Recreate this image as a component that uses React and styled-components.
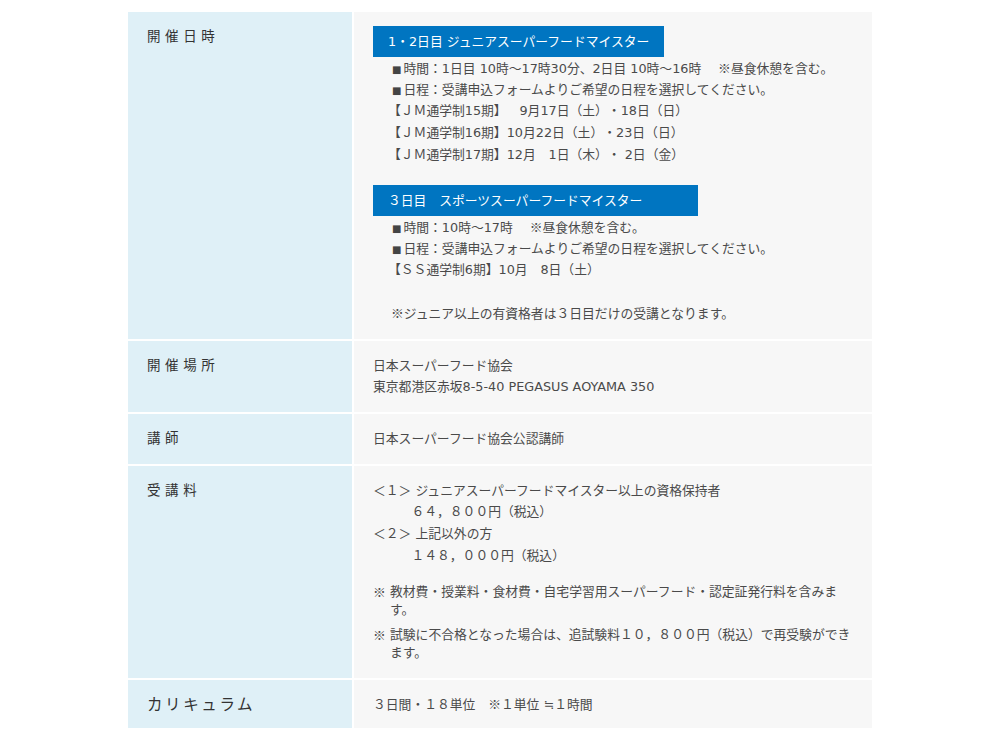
import React from "react";
import styled, { createGlobalStyle } from "styled-components";

const Global = createGlobalStyle`
  html, body { margin: 0; padding: 0; background: #ffffff; }
  body {
    font-family: "DejaVu Sans", "Noto Sans CJK JP", sans-serif;
    color: #444;
    text-spacing-trim: space-all;
  }
`;

const Table = styled.div`
  width: 744px;
  margin: 12px auto 0;
  display: grid;
  grid-template-columns: 224px 518px;
  column-gap: 2px;
  row-gap: 2px;
`;

const Label = styled.div`
  background: #dff0f7;
  padding: 13px 10px 14px 19px;
  font-family: "Noto Sans CJK JP", sans-serif;
  font-size: ${(p) => (p.$big ? "15.5px" : "13.5px")};
  letter-spacing: ${(p) => (p.$big ? "2.6px" : "4.6px")};
  line-height: 21.7px;
  color: #333;
`;

const Cell = styled.div`
  background: #f7f7f7;
  padding: ${(p) => p.$pad || "14px 19px 14px 19px"};
  font-family: "DejaVu Sans", "Noto Sans CJK JP", sans-serif;
  font-size: 12.8px;
  line-height: 21.7px;
  color: #4a4a4a;
  text-spacing-trim: space-all;
`;

const Section = styled.div`
  margin-bottom: ${(p) => p.$mb || "0px"};
`;

const Heading = styled.div`
  width: ${(p) => p.$w}px;
  box-sizing: border-box;
  height: 31px;
  line-height: 31px;
  padding-left: 15px;
  background: #0075c1;
  color: #ffffff;
  font-size: 12.8px;
  white-space: pre;
  overflow: hidden;
`;

const Indented = styled.div`
  padding-left: ${(p) => p.$pl || "15px"};
`;

const Line = styled.div`
  height: ${(p) => p.$h || "21.7px"};
  line-height: ${(p) => p.$h || "21.7px"};
  white-space: pre;
`;

const Bullet = styled.span`
  display: inline-block;
  margin-left: 4px;
  margin-right: 2px;
  font-family: "DejaVu Sans", sans-serif;
  font-size: 10px;
  color: #444;
`;

const Cjk = styled.span`
  font-family: "Noto Sans CJK JP", sans-serif;
`;

const Notes = styled.div`
  margin-top: 16px;
  margin-bottom: 2px;
  display: flex;
  flex-direction: column;
  gap: 7px;
`;

const Note = styled.div`
  position: relative;
  padding-left: 17px;
`;

const Mark = styled.span`
  position: absolute;
  left: 0;
  top: 0;
  line-height: 18px;
  font-family: "Noto Sans CJK JP", sans-serif;
`;

export default function App() {
  return (
    <>
      <Global />
      <Table>
        <Label>開催日時</Label>
        <Cell $pad="14px 19px 15px 19px">
          <Section $mb="19.5px">
            <Heading $w={291}>1・2日目 ジュニアスーパーフードマイスター</Heading>
            <Indented>
              <Line><Bullet>■</Bullet>時間：1日目 10時～17時30分、2日目 10時～16時　 <Cjk>※</Cjk>昼食休憩を含む。</Line>
              <Line><Bullet>■</Bullet>日程：受講申込フォームよりご希望の日程を選択してください。</Line>
              <Line>【ＪＭ通学制15期】　9月17日（土）・18日（日）</Line>
              <Line>【ＪＭ通学制16期】10月22日（土）・23日（日）</Line>
              <Line>【ＪＭ通学制17期】12月　1日（木）・ 2日（金）</Line>
            </Indented>
          </Section>
          <Section $mb="21px">
            <Heading $w={325}>３日目　スポーツスーパーフードマイスター</Heading>
            <Indented>
              <Line><Bullet>■</Bullet>時間：10時～17時　 <Cjk>※</Cjk>昼食休憩を含む。</Line>
              <Line><Bullet>■</Bullet>日程：受講申込フォームよりご希望の日程を選択してください。</Line>
              <Line>【ＳＳ通学制6期】10月　8日（土）</Line>
            </Indented>
          </Section>
          <Indented $pl="18px">
            <Line><Cjk>※</Cjk>ジュニア以上の有資格者は３日目だけの受講となります。</Line>
          </Indented>
        </Cell>

        <Label>開催場所</Label>
        <Cell>
          <Line>日本スーパーフード協会</Line>
          <Line>東京都港区赤坂8-5-40 PEGASUS AOYAMA 350</Line>
        </Cell>

        <Label>講師</Label>
        <Cell>
          <Line>日本スーパーフード協会公認講師</Line>
        </Cell>

        <Label>受講料</Label>
        <Cell $pad="14px 19px 14px 19px">
          <Line>＜１＞ ジュニアスーパーフードマイスター以上の資格保持者</Line>
          <Line>　　　６４，８００円（税込）</Line>
          <Line>＜２＞ 上記以外の方</Line>
          <Line>　　　１４８，０００円（税込）</Line>
          <Notes>
            <Note>
              <Mark>※</Mark>
              <Line $h="18px">教材費・授業料・食材費・自宅学習用スーパーフード・認定証発行料を含みま</Line>
              <Line $h="18px">す。</Line>
            </Note>
            <Note>
              <Mark>※</Mark>
              <Line $h="18px">試験に不合格となった場合は、追試験料１０，８００円（税込）で再受験ができ</Line>
              <Line $h="18px">ます。</Line>
            </Note>
          </Notes>
        </Cell>

        <Label $big>カリキュラム</Label>
        <Cell $pad="13px 19px 14px 19px">
          <Line>３日間・１８単位　<Cjk>※</Cjk>１単位 ≒１時間</Line>
        </Cell>
      </Table>
    </>
  );
}
